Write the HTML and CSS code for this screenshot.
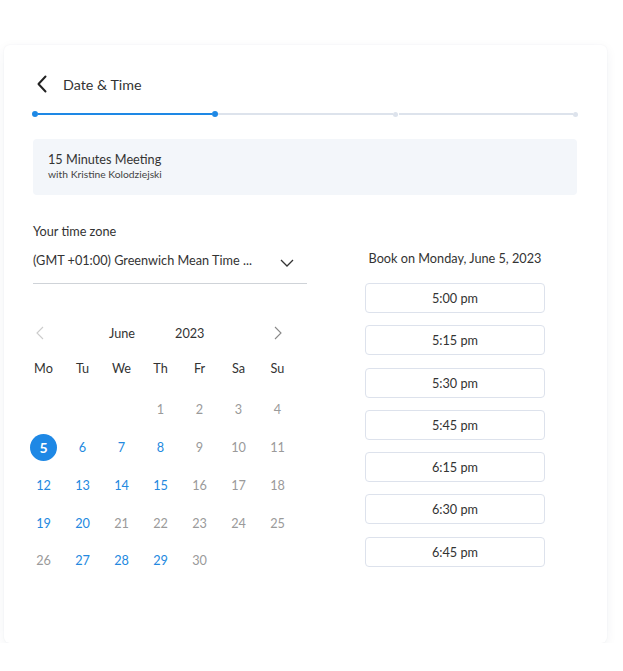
FILE: index.html
```html
<!doctype html>
<html lang="en">
<head>
    <meta charset="UTF-8">
    <meta name="viewport" content="width=device-width, initial-scale=1.0">
    <title>Date &amp; Time</title>
    <link rel="stylesheet" href="styles.css">
</head>
<body>
    <div class="card">
        <div class="header">
            <svg class="back" width="12" height="18" viewBox="0 0 12 18">
                <path d="M9.5 1.5 L2.5 9 L9.5 16.5" fill="none" stroke="#222" stroke-width="2" stroke-linecap="round" stroke-linejoin="round"/>
            </svg>
            <div class="title">Date &amp; Time</div>
        </div>

        <div class="steps">
            <div class="dot done"></div>
            <div class="bar done"></div>
            <div class="dot done"></div>
            <div class="bar"></div>
            <div class="dot"></div>
            <div class="bar"></div>
            <div class="dot"></div>
        </div>

        <div class="meeting">
            <div class="meeting-name">15 Minutes Meeting</div>
            <div class="meeting-host">with Kristine Kolodziejski</div>
        </div>

        <div class="body">
            <div class="left">
                <div class="label">Your time zone</div>
                <div class="select">
                    <span>(GMT +01:00) Greenwich Mean Time ...</span>
                    <svg width="14" height="8" viewBox="0 0 14 8">
                        <path d="M1 1 L7 7 L13 1" fill="none" stroke="#333" stroke-width="1.3"/>
                    </svg>
                </div>

                <div class="calendar">
                    <div class="cal-head">
                        <svg class="prev" width="8" height="14" viewBox="0 0 8 14">
                            <path d="M7 1 L1 7 L7 13" fill="none" stroke="#ccc" stroke-width="1.1"/>
                        </svg>
                        <span class="month">June</span>
                        <span class="year">2023</span>
                        <svg class="next" width="8" height="14" viewBox="0 0 8 14">
                            <path d="M1 1 L7 7 L1 13" fill="none" stroke="#888" stroke-width="1.1"/>
                        </svg>
                    </div>
                    <div class="weekdays">
                        <span>Mo</span><span>Tu</span><span>We</span><span>Th</span><span>Fr</span><span>Sa</span><span>Su</span>
                    </div>
                    <div class="days"></div>
                </div>
            </div>

            <div class="right">
                <div class="book-on">Book on Monday, June 5, 2023</div>
                <div class="slots">
                    <div class="slot">5:00 pm</div>
                    <div class="slot">5:15 pm</div>
                    <div class="slot">5:30 pm</div>
                    <div class="slot">5:45 pm</div>
                    <div class="slot">6:15 pm</div>
                    <div class="slot">6:30 pm</div>
                    <div class="slot">6:45 pm</div>
                </div>
            </div>
        </div>
    </div>
    <script>
        const days = document.querySelector(".days");
        const open = [5, 6, 7, 8, 12, 13, 14, 15, 19, 20, 27, 28, 29];
        const selected = 5;
        const firstWeekday = 3; // June 1st 2023 is a Thursday

        for (let i = 0; i < firstWeekday; i++) {
            days.appendChild(document.createElement("span"));
        }
        for (let d = 1; d <= 30; d++) {
            const day = document.createElement("span");
            day.className = "day";
            if (open.includes(d)) day.classList.add("open");
            if (d === selected) day.classList.add("selected");
            day.innerHTML = `<b>${d}</b>`;
            days.appendChild(day);
        }
    </script>
</body>
</html>
```

FILE: styles.css
```css
* {
    margin: 0;
    padding: 0;
    box-sizing: border-box;
}

body {
    background: #fff;
    font-family: Lato, "Open Sans", sans-serif;
    font-size: 12.7px;
    color: #333;
}

.card {
    width: 603px;
    height: 598px;
    margin: 45px 0 0 4px;
    padding: 27px 29px 0;
    background: #fff;
    border-radius: 6px;
    box-shadow: 0 3px 12px rgba(30, 50, 80, 0.06), 0 0 2px rgba(30, 50, 80, 0.05);
}

.header {
    display: flex;
    align-items: center;
    height: 24px;
    padding-left: 3px;
}

.back {
    display: block;
}

.title {
    margin-left: 15px;
    font-size: 14.3px;
    color: #333;
}

/* progress steps */
.steps {
    display: flex;
    align-items: center;
    margin: 15px -1px 0;
    height: 6px;
}

.dot {
    width: 5px;
    height: 5px;
    margin: 0 0.5px;
    border-radius: 50%;
    background: #dde3ec;
}

.dot.done {
    width: 6px;
    height: 6px;
    margin: 0;
    background: #1e88e5;
}

.bar {
    flex: 1;
    height: 2px;
    background: #dde3ec;
}

.bar.done {
    background: #1e88e5;
}

.meeting {
    margin: 22px 1px 0 0;
    height: 56px;
    padding: 12px 15px;
    background: #f3f6fa;
    border-radius: 4px;
}

.meeting-name {
    line-height: 16px;
    color: #333;
}

.meeting-host {
    font-size: 10.3px;
    line-height: 14px;
    color: #444;
}

.body {
    display: flex;
}

.left {
    width: 274px;
    padding-top: 28px;
}

.label {
    line-height: 16px;
    color: #333;
}

.select {
    display: flex;
    align-items: center;
    justify-content: space-between;
    margin-top: 9px;
    height: 36px;
    padding: 0 13px 11px 0;
    border-bottom: 1px solid #cfd3d8;
    color: #333;
}

.select svg {
    margin-top: 5px;
}

/* calendar */
.calendar {
    width: 273px;
    margin: 39px 0 0 -9px;
}

.cal-head {
    display: flex;
    align-items: center;
    height: 20px;
    color: #333;
}

.prev {
    margin-left: 12px;
}

.month {
    margin-left: 65px;
}

.year {
    margin-left: 40px;
}

.next {
    margin-left: auto;
    margin-right: 15px;
}

.weekdays {
    display: grid;
    grid-template-columns: repeat(7, 39px);
    margin-top: 15px;
    height: 20px;
    line-height: 20px;
    color: #333;
    text-align: center;
}

.days {
    display: grid;
    grid-template-columns: repeat(7, 39px);
    grid-auto-rows: 37.75px;
    margin-top: 13px;
}

.day {
    display: flex;
    align-items: center;
    justify-content: center;
    color: #9a9a9a;
}

.day b {
    font-weight: normal;
    width: 27px;
    height: 27px;
    line-height: 27px;
    text-align: center;
    border-radius: 50%;
}

.day.open {
    color: #2389e0;
}

.day.selected b {
    background: #1e88e5;
    color: #fff;
    font-weight: bold;
    font-size: 14px;
}

/* time slots */
.right {
    width: 180px;
    margin-left: 58px;
    padding-top: 55px;
}

.book-on {
    line-height: 16px;
    text-align: center;
    color: #333;
}

.slots {
    display: flex;
    flex-direction: column;
    gap: 12.3px;
    margin-top: 17px;
}

.slot {
    height: 30px;
    line-height: 28px;
    border: 1px solid #dde2ec;
    border-radius: 4px;
    text-align: center;
    color: #333;
}
```
